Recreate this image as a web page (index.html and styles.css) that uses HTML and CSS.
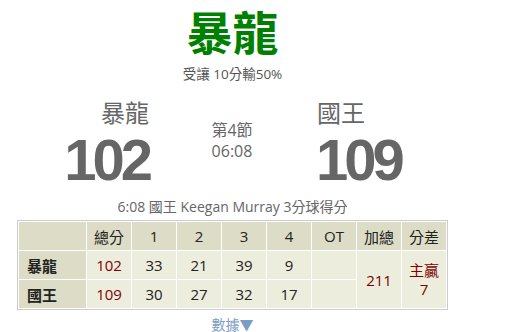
FILE: index.html
```html
<!DOCTYPE html>
<html lang="zh-Hant">
<head>
<meta charset="utf-8">
<title>暴龍 vs 國王</title>
<link rel="stylesheet" href="styles.css">
</head>
<body>
<div class="wrap">
  <div class="title">暴龍</div>
  <div class="spread">受讓 10分輸50%</div>
  <div class="board">
    <div class="team team-away">
      <div class="name">暴龍</div>
      <div class="score">102</div>
    </div>
    <div class="status">
      <div>第4節</div>
      <div>06:08</div>
    </div>
    <div class="team team-home">
      <div class="name">國王</div>
      <div class="score">109</div>
    </div>
  </div>
  <div class="play">6:08 國王 Keegan Murray 3分球得分</div>
  <table class="box">
    <thead>
      <tr>
        <th class="lbl"></th>
        <th>總分</th>
        <th>1</th>
        <th>2</th>
        <th>3</th>
        <th>4</th>
        <th>OT</th>
        <th>加總</th>
        <th>分差</th>
      </tr>
    </thead>
    <tbody>
      <tr>
        <td class="lbl">暴龍</td>
        <td class="red">102</td>
        <td>33</td>
        <td>21</td>
        <td>39</td>
        <td>9</td>
        <td></td>
        <td class="red" rowspan="2">211</td>
        <td class="red diff" rowspan="2">主贏<br>7</td>
      </tr>
      <tr>
        <td class="lbl">國王</td>
        <td class="red">109</td>
        <td>30</td>
        <td>27</td>
        <td>32</td>
        <td>17</td>
        <td></td>
      </tr>
    </tbody>
  </table>
  <div class="more">數據▼</div>
</div>
</body>
</html>
```

FILE: styles.css
```css
html, body {
  margin: 0;
  padding: 0;
  background: #fff;
}

body {
  font-family: "Open Sans", "Noto Sans CJK TC", sans-serif;
  color: #666;
}

.wrap {
  width: 431px;
  margin-left: 17px;
  text-align: center;
}

.title {
  font-family: "Noto Sans CJK TC", sans-serif;
  font-weight: bold;
  font-size: 46px;
  line-height: 60px;
  color: #008000;
}

.spread {
  font-size: 13.5px;
  line-height: 18px;
  margin-top: 5px;
  color: #555;
}

.board {
  display: grid;
  grid-template-columns: 134px 162px 135px;
  margin-top: 15px;
}

.name {
  font-family: "Noto Sans CJK TC", sans-serif;
  font-size: 24px;
  line-height: 28px;
  color: #666;
}

.score {
  font-family: "Liberation Sans", Arial, sans-serif;
  font-weight: bold;
  font-size: 58px;
  line-height: 60px;
  letter-spacing: -4px;
  margin-top: 4px;
  color: #666;
}

.team-away {
  text-align: right;
}

.team-away .name {
  padding-right: 2px;
}

.team-away .score {
  padding-right: 2px;
}

.team-home {
  text-align: left;
}

.team-home .name {
  padding-left: 4px;
}

.team-home .score {
  padding-left: 3px;
}

.status {
  font-size: 16px;
  line-height: 21px;
  color: #666;
  padding-top: 22px;
}

.play {
  font-size: 14px;
  line-height: 20px;
  margin-top: 7px;
  color: #666;
}

.box {
  border: 1px solid #ccc;
  border-spacing: 1px;
  background: #fff;
  margin-top: 3px;
  width: 431px;
  table-layout: fixed;
  font-size: 15px;
  color: #222;
}

.box th,
.box td {
  height: 28px;
  padding: 0;
  text-align: center;
  font-weight: normal;
  background: #ededde;
  width: 44px;
}

.box th {
  background: #dddcc6;
}

.box .lbl {
  width: 67px;
  background: #dddcc6;
  text-align: left;
  padding-left: 8px;
  font-weight: bold;
  box-sizing: border-box;
}

.box .red {
  color: #800000;
}

.box .diff {
  line-height: 19px;
}

.more {
  font-size: 14px;
  line-height: 16px;
  margin-top: 7px;
  color: #7d9cc2;
}
```
